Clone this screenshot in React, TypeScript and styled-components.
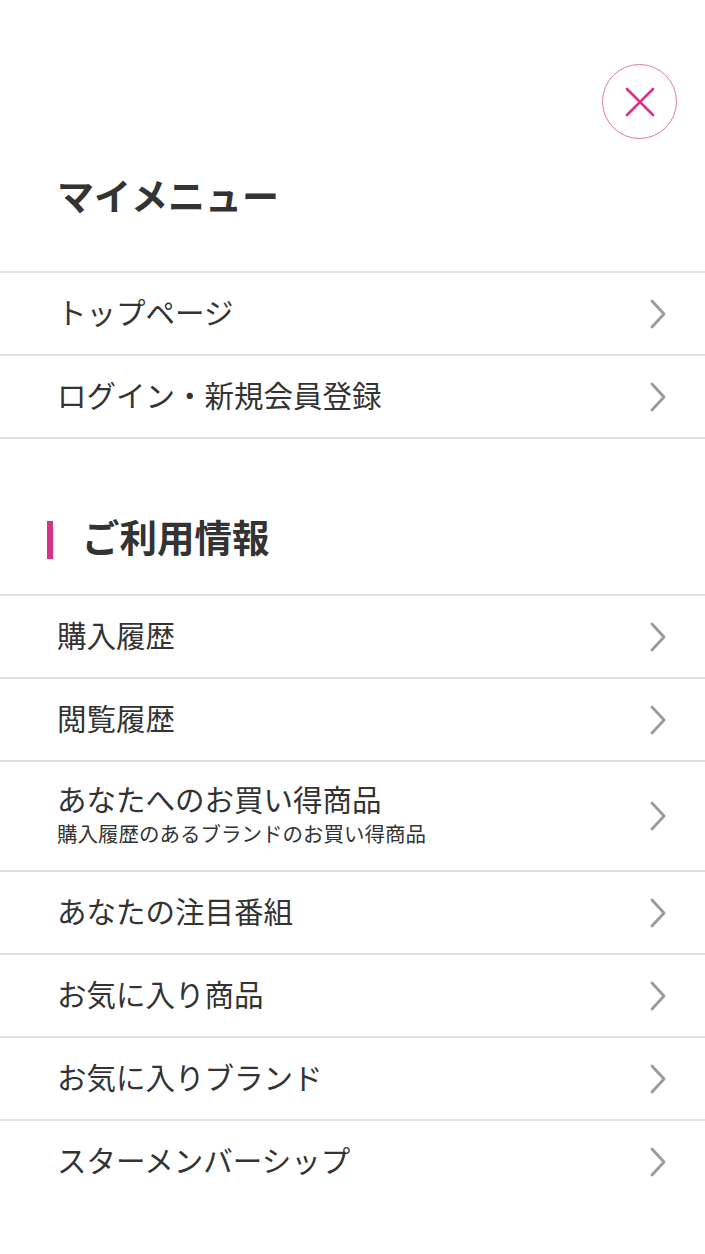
import React from "react";
import styled, { createGlobalStyle } from "styled-components";

const pink = "#d9328a";
const ink = "#333333";
const line = "#e0e0e0";

const GlobalStyle = createGlobalStyle`
  html, body {
    margin: 0;
    padding: 0;
    background: #fff;
  }
  body {
    font-family: "Noto Sans CJK JP", "Noto Sans", sans-serif;
    color: ${ink};
  }
`;

const Page = styled.div`
  width: 705px;
  min-height: 1254px;
  background: #fff;
`;

const TopBar = styled.div`
  display: flex;
  justify-content: flex-end;
  padding: 64px 28px 0 0;
`;

const CloseButton = styled.button`
  width: 75px;
  height: 75px;
  border-radius: 50%;
  border: 1.5px solid #e374ad;
  background: #fff;
  display: flex;
  align-items: center;
  justify-content: center;
  padding: 0;
  cursor: pointer;
`;

const Title = styled.h1`
  margin: 29px 0 49px 57px;
  font-size: 37px;
  line-height: 54px;
  font-weight: 700;
  color: ${ink};
`;

const SectionTitle = styled.h2`
  position: relative;
  margin: 70px 0 31px 0;
  padding-left: 82px;
  font-size: 37.5px;
  line-height: 54px;
  font-weight: 700;
  color: ${ink};

  &::before {
    content: "";
    position: absolute;
    left: 47px;
    top: 12px;
    width: 6px;
    height: 38px;
    background: ${pink};
  }
`;

const List = styled.ul`
  list-style: none;
  margin: 0;
  padding: 0;
  border-top: 2px solid ${line};
`;

const Row = styled.li<{ $last?: boolean }>`
  display: flex;
  align-items: center;
  justify-content: space-between;
  min-height: 83px;
  padding: 0 38px 0 57px;
  border-bottom: 2px solid ${({ $last }) => ($last ? "transparent" : line)};
  box-sizing: border-box;
`;

const Label = styled.div`
  display: flex;
  flex-direction: column;
  padding: 16px 0 22px;
`;

const Main = styled.span`
  font-size: 29.5px;
  line-height: 40px;
  font-weight: 400;
  color: ${ink};
`;

const Sub = styled.span`
  font-size: 20.5px;
  line-height: 30px;
  color: ${ink};
`;

const Chevron = () => (
  <svg width="18" height="30" viewBox="0 0 18 30" fill="none">
    <path d="M3 2 L15 15 L3 28" stroke="#9a9a9a" strokeWidth="2.8" strokeLinecap="round" strokeLinejoin="round" />
  </svg>
);

const CloseIcon = () => (
  <svg width="30" height="30" viewBox="0 0 30 30" fill="none">
    <path d="M2 2 L28 28 M28 2 L2 28" stroke={pink} strokeWidth="2.6" strokeLinecap="round" />
  </svg>
);

type Item = { label: string; sub?: string };

const topItems: Item[] = [{ label: "トップページ" }, { label: "ログイン・新規会員登録" }];

const infoItems: Item[] = [
  { label: "購入履歴" },
  { label: "閲覧履歴" },
  { label: "あなたへのお買い得商品", sub: "購入履歴のあるブランドのお買い得商品" },
  { label: "あなたの注目番組" },
  { label: "お気に入り商品" },
  { label: "お気に入りブランド" },
  { label: "スターメンバーシップ" },
];

const MenuList = ({ items, openEnd }: { items: Item[]; openEnd?: boolean }) => (
  <List>
    {items.map((item, i) => (
      <Row key={item.label} $last={openEnd && i === items.length - 1}>
        <Label>
          <Main>{item.label}</Main>
          {item.sub && <Sub>{item.sub}</Sub>}
        </Label>
        <Chevron />
      </Row>
    ))}
  </List>
);

const App = () => {
  return (
    <Page>
      <GlobalStyle />
      <TopBar>
        <CloseButton aria-label="閉じる">
          <CloseIcon />
        </CloseButton>
      </TopBar>
      <Title>マイメニュー</Title>
      <MenuList items={topItems} />
      <SectionTitle>ご利用情報</SectionTitle>
      <MenuList items={infoItems} openEnd />
    </Page>
  );
};

export default App;
